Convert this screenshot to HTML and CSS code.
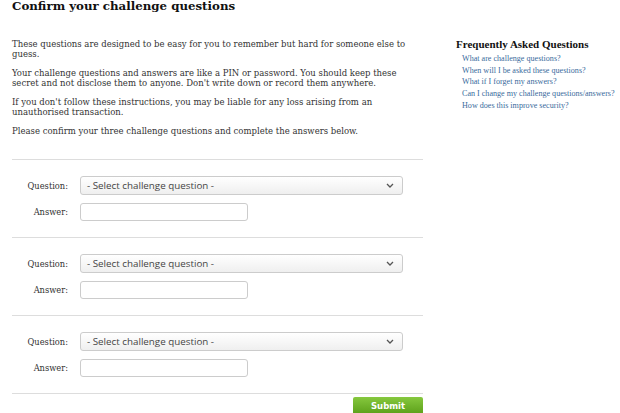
FILE: index.html
```html
<!DOCTYPE html>
<html>
<head>
<meta charset="utf-8">
<link rel="stylesheet" href="styles.css">
</head>
<body>
<div class="page">
  <div class="main">
    <h1 class="title">Confirm your challenge questions</h1>
    <div class="intro">
      <p>These questions are designed to be easy for you to remember but hard for someone else to guess.</p>
      <p>Your challenge questions and answers are like a PIN or password. You should keep these secret and not disclose them to anyone. Don't write down or record them anywhere.</p>
      <p>If you don't follow these instructions, you may be liable for any loss arising from an unauthorised transaction.</p>
      <p>Please confirm your three challenge questions and complete the answers below.</p>
    </div>
    <form class="form">
      <div class="group">
        <div class="row"><label class="lbl">Question:</label><div class="select"><span>- Select challenge question -</span><svg class="chev" width="8" height="5" viewBox="0 0 8 5"><path d="M1 1 L4 4 L7 1" fill="none" stroke="#555" stroke-width="1.3"/></svg></div></div>
        <div class="row"><label class="lbl">Answer:</label><div class="input"></div></div>
      </div>
      <div class="group">
        <div class="row"><label class="lbl">Question:</label><div class="select"><span>- Select challenge question -</span><svg class="chev" width="8" height="5" viewBox="0 0 8 5"><path d="M1 1 L4 4 L7 1" fill="none" stroke="#555" stroke-width="1.3"/></svg></div></div>
        <div class="row"><label class="lbl">Answer:</label><div class="input"></div></div>
      </div>
      <div class="group">
        <div class="row"><label class="lbl">Question:</label><div class="select"><span>- Select challenge question -</span><svg class="chev" width="8" height="5" viewBox="0 0 8 5"><path d="M1 1 L4 4 L7 1" fill="none" stroke="#555" stroke-width="1.3"/></svg></div></div>
        <div class="row"><label class="lbl">Answer:</label><div class="input"></div></div>
      </div>
      <div class="actions"><div class="submit">Submit</div></div>
    </form>
  </div>
  <div class="side">
    <h2 class="faq-title">Frequently Asked Questions</h2>
    <ul class="faq">
      <li><a href="#">What are challenge questions?</a></li>
      <li><a href="#">When will I be asked these questions?</a></li>
      <li><a href="#">What if I forget my answers?</a></li>
      <li><a href="#">Can I change my challenge questions/answers?</a></li>
      <li><a href="#">How does this improve security?</a></li>
    </ul>
  </div>
</div>
</body>
</html>
```
FILE: styles.css
```css
html, body { margin: 0; padding: 0; background: #fff; }
body { font-family: "DejaVu Serif", "Liberation Serif", serif; color: #222; }
.page { display: flex; padding-left: 12px; }
.main { width: 411px; flex-shrink: 0; }
.title { font-size: 11.8px; line-height: 12px; margin: 0; font-weight: bold; color: #111; }
.intro { width: 395px; margin-top: 27px; }
.intro p { font-size: 8.5px; line-height: 10px; margin: 0 0 9px 0; color: #333; }
.form { margin-top: 23px; }
.group { border-top: 1px solid #ddd; padding: 16px 0 16px 0; display: flex; flex-direction: column; gap: 8px; }
.row { display: flex; align-items: center; }
.lbl { width: 56px; text-align: right; font-size: 8.3px; color: #333; margin-right: 12px; }
.select { height: 17px; border: 1px solid #ccc; border-radius: 3px; background: linear-gradient(#fff, #efefef); display: flex; align-items: center; justify-content: space-between; padding: 0 8px 0 6px; box-sizing: content-box; width: 307px; }
.select span { font-family: "Open Sans", "DejaVu Sans", sans-serif; font-size: 9.8px; color: #444; }
.input { width: 166px; height: 16px; border: 1px solid #ccc; border-radius: 3px; background: #fff; }
.actions { border-top: 1px solid #ddd; display: flex; justify-content: flex-end; padding-top: 3px; }
.submit { width: 70px; height: 18px; border-radius: 2px; background: linear-gradient(#86c83e, #5a9e18); color: #fff; font-family: "DejaVu Sans", sans-serif; font-weight: bold; font-size: 8.5px; display: flex; align-items: center; justify-content: center; }
.side { margin-left: 33px; padding-top: 38px; flex-shrink: 0; }
.faq-title { font-family: "Liberation Serif", serif; font-size: 11px; line-height: 12px; margin: 0; font-weight: bold; color: #111; }
.faq { list-style: none; margin: 3px 0 0 6px; padding: 0; font-family: "Liberation Serif", serif; }
.faq li { font-size: 8.1px; line-height: 11.7px; white-space: nowrap; }
.faq a { color: #3a6b9c; text-decoration: none; }
```
